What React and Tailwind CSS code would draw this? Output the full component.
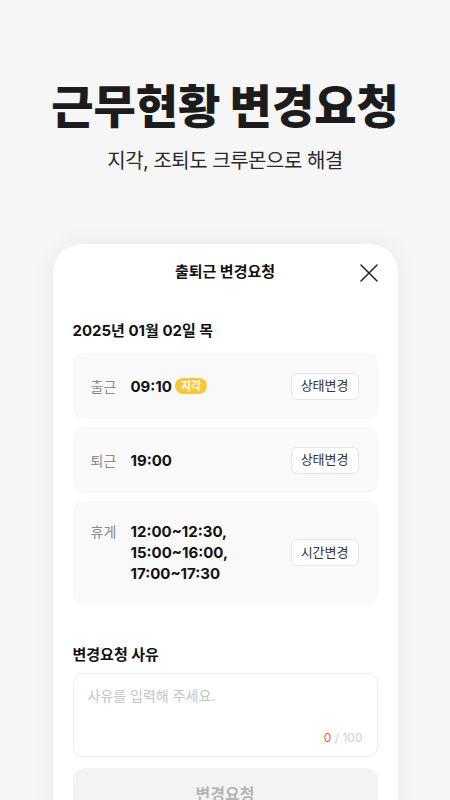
const FONT = "font-['Inter','Noto_Sans_CJK_KR','Noto_Sans',sans-serif]";

function Row({ label, children, action, tall }) {
  return (
    <div className={`flex items-center bg-[#f9f9f9] rounded-[10px] pl-[18px] pr-[19px] ${tall ? 'py-5' : 'h-[66px]'}`}>
      <span className={`w-10 shrink-0 text-[14px] text-[#8a8a8a] ${tall ? 'self-start leading-[21px]' : ''}`}>{label}</span>
      <div className="flex-1 text-[15px] font-bold text-[#111] leading-[21px]">{children}</div>
      <button className="h-[27px] px-[9px] bg-white border border-[#e6e6e6] rounded-[6px] text-[13px] text-[#333]">
        {action}
      </button>
    </div>
  );
}

export default function App() {
  return (
    <div className={`bg-[#f6f6f6] min-h-screen h-[800px] overflow-hidden ${FONT}`}>
      <div className="pt-[78px] text-center">
        <h1 className="text-[46px] font-black text-[#1c1c1c] leading-[56px]">근무현황 변경요청</h1>
        <p className="mt-[14px] text-[20px] text-[#2a2a2a] leading-[26px] tracking-[-0.5px]">지각, 조퇴도 크루몬으로 해결</p>
      </div>

      <div className="mt-[70px] w-[345px] mx-auto bg-white rounded-t-[28px] shadow-[0_0_24px_rgba(0,0,0,0.06)] px-5 pb-10">
        <div className="relative h-14 flex items-center justify-center">
          <span className="text-[15px] font-bold text-[#111]">출퇴근 변경요청</span>
          <svg className="absolute right-0 top-[20px] w-[18px] h-[18px]" viewBox="0 0 18 18" fill="none" stroke="#222" strokeWidth="1.5" strokeLinecap="round">
            <path d="M1 1L17 17M17 1L1 17" />
          </svg>
        </div>

        <p className="mt-5 text-[15px] font-bold text-[#111] leading-[22px]">2025년 01월 02일 목</p>

        <div className="mt-[11px] flex flex-col gap-2">
          <Row label="출근" action="상태변경">
            <span className="inline-flex items-center gap-[3px]">
              09:10
              <span className="inline-flex items-center h-[16px] px-[6px] rounded-full bg-[#fcc63b] text-white text-[11px] font-bold leading-none">지각</span>
            </span>
          </Row>
          <Row label="퇴근" action="상태변경">19:00</Row>
          <Row label="휴게" action="시간변경" tall>
            <div>12:00~12:30,</div>
            <div>15:00~16:00,</div>
            <div>17:00~17:30</div>
          </Row>
        </div>

        <p className="mt-10 text-[15px] font-bold text-[#111] leading-[22px]">변경요청 사유</p>
        <div className="mt-[7px] h-[84px] border border-[#ececec] rounded-[10px] px-[14px] pt-[12px] pb-[10px] flex flex-col justify-between">
          <span className="text-[14px] text-[#c4c4c4] leading-[20px]">사유를 입력해 주세요.</span>
          <span className="self-end text-[12px] leading-[16px] text-[#cfcfcf]">
            <span className="text-[#ff5a36]">0</span> / 100
          </span>
        </div>

        <button className="mt-[11px] w-full h-[52px] rounded-[12px] bg-[#f3f3f3] text-[16px] font-bold text-[#b5b5b5]">
          변경요청
        </button>
      </div>
    </div>
  );
}
